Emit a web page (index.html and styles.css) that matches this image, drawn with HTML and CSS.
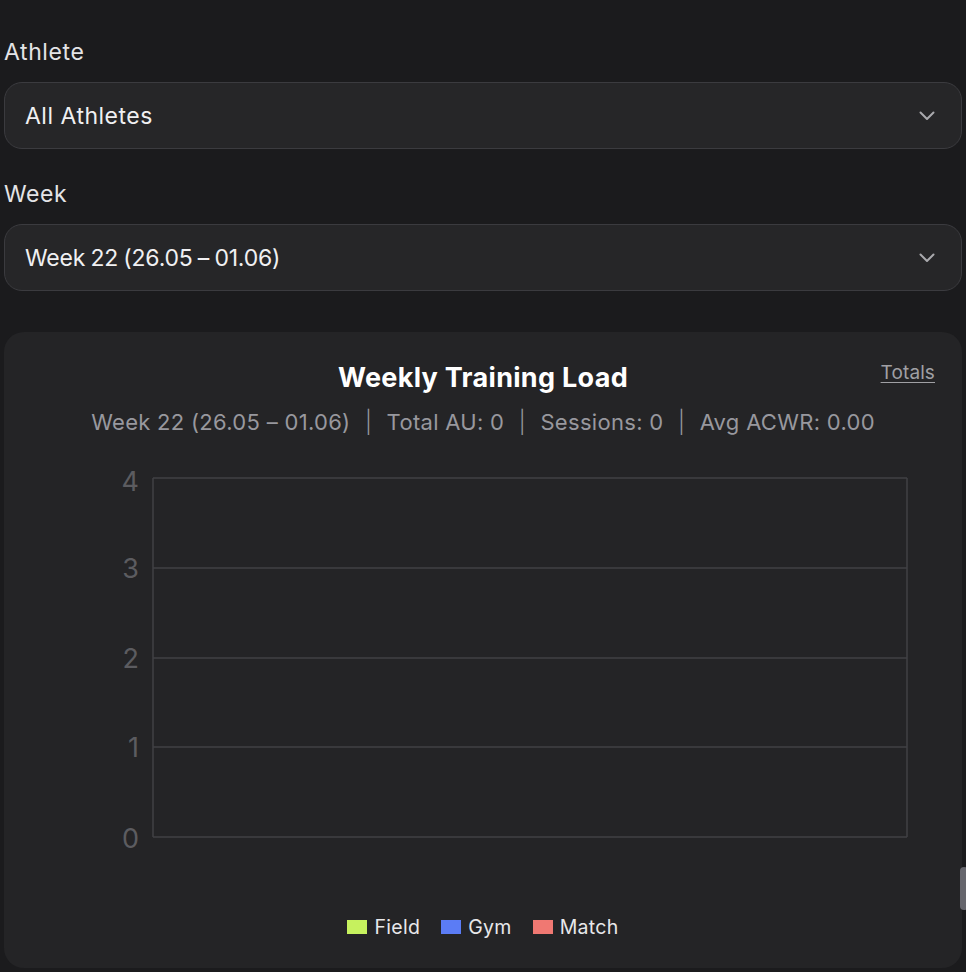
FILE: index.html
```html
<!DOCTYPE html>
<html lang="en">
<head>
<meta charset="utf-8">
<title>Weekly Training Load</title>
<link rel="stylesheet" href="styles.css">
</head>
<body>
<div class="page">
  <div class="field">
    <label class="field-label">Athlete</label>
    <div class="select">
      <span class="select-value">All Athletes</span>
      <svg class="chev" width="16" height="10" viewBox="0 0 16 10"><path d="M1.5 1.5 L8 8 L14.5 1.5" fill="none" stroke="#a9a9ad" stroke-width="2" stroke-linecap="round" stroke-linejoin="round"/></svg>
    </div>
  </div>
  <div class="field">
    <label class="field-label">Week</label>
    <div class="select">
      <span class="select-value num">Week 22 (26.05 – 01.06)</span>
      <svg class="chev" width="16" height="10" viewBox="0 0 16 10"><path d="M1.5 1.5 L8 8 L14.5 1.5" fill="none" stroke="#a9a9ad" stroke-width="2" stroke-linecap="round" stroke-linejoin="round"/></svg>
    </div>
  </div>

  <section class="card">
    <a class="totals" href="#">Totals</a>
    <h2 class="card-title">Weekly Training Load</h2>
    <p class="card-sub">Week 22 (26.05 – 01.06) <span class="sep">|</span> Total AU: 0 <span class="sep">|</span> Sessions: 0 <span class="sep">|</span> Avg ACWR: 0.00</p>
    <svg class="chart" width="958" height="400" viewBox="0 0 958 400">
      <g stroke="#414145" stroke-width="1.5" fill="none">
        <line x1="149" y1="18" x2="903" y2="18"/>
        <line x1="149" y1="108" x2="903" y2="108"/>
        <line x1="149" y1="198" x2="903" y2="198"/>
        <line x1="149" y1="287" x2="903" y2="287"/>
        <line x1="149" y1="377" x2="903" y2="377"/>
        <line x1="149" y1="18" x2="149" y2="377"/>
        <line x1="903" y1="18" x2="903" y2="377"/>
      </g>
      <g class="ytick" text-anchor="end">
        <text x="135" y="31">4</text>
        <text x="135" y="118">3</text>
        <text x="135" y="208">2</text>
        <text x="135" y="297">1</text>
        <text x="135" y="388">0</text>
      </g>
    </svg>
    <div class="legend">
      <span class="legend-item"><i class="sw sw-field"></i>Field</span>
      <span class="legend-item"><i class="sw sw-gym"></i>Gym</span>
      <span class="legend-item"><i class="sw sw-match"></i>Match</span>
    </div>
  </section>
</div>
<div class="scroll-thumb"></div>
</body>
</html>
```

FILE: styles.css
```css
html, body {
  margin: 0;
  padding: 0;
  background: #1b1b1d;
}
body {
  font-family: "Inter", "Noto Sans", sans-serif;
  color: #e6e6e8;
  width: 966px;
  height: 972px;
  overflow: hidden;
  position: relative;
}
.page {
  padding: 39px 4px 0 4px;
}
.field {
  display: flex;
  flex-direction: column;
}
.field + .field {
  margin-top: 32px;
}
.field-label {
  font-size: 23px;
  line-height: 26px;
  letter-spacing: 0.6px;
  color: #e4e4e6;
  margin-bottom: 17px;
}
.select {
  height: 67px;
  box-sizing: border-box;
  border: 1px solid #3b3b3f;
  border-radius: 18px;
  background: #262628;
  display: flex;
  align-items: center;
  justify-content: space-between;
  padding: 0 26px 0 20px;
}
.select-value {
  font-size: 23px;
  letter-spacing: 0.5px;
  color: #f0f0f2;
}
.select-value.num {
  font-variant-numeric: proportional-nums;
  letter-spacing: -0.2px;
  word-spacing: -1px;
}
.chev {
  display: block;
}
.card {
  position: relative;
  margin-top: 41px;
  height: 636px;
  box-sizing: border-box;
  background: #242426;
  border-radius: 20px;
  padding-top: 30px;
}
.totals {
  position: absolute;
  top: 29px;
  right: 27px;
  font-size: 19px;
  letter-spacing: 0.1px;
  color: #a0a0a4;
  text-decoration: underline;
  text-underline-offset: 3px;
}
.card-title {
  margin: 0;
  text-align: center;
  font-size: 27px;
  line-height: 32px;
  letter-spacing: 0.3px;
  font-weight: 700;
  color: #ffffff;
}
.card-sub {
  margin: 15px 0 0;
  text-align: center;
  font-size: 22px;
  line-height: 26px;
  letter-spacing: 0.3px;
  color: #98989e;
}
.sep {
  margin: 0 8px;
  font-weight: 300;
}
.chart {
  display: block;
  margin-top: 25px;
}
.ytick text {
  font-family: "Inter", "Noto Sans", sans-serif;
  font-size: 27px;
  fill: #5c5c60;
}
.legend {
  margin-top: 55px;
  display: flex;
  justify-content: center;
  gap: 21px;
  font-size: 19.5px;
  letter-spacing: 0.3px;
  color: #e8e8ea;
}
.legend-item {
  display: flex;
  align-items: center;
}
.sw {
  display: inline-block;
  width: 20px;
  height: 14px;
  margin-right: 7px;
}
.sw-field { background: #c6f15e; }
.sw-gym { background: #5b7cf5; }
.sw-match { background: #f07872; }
.scroll-thumb {
  position: absolute;
  left: 960px;
  top: 867px;
  width: 8px;
  height: 43px;
  border-radius: 4px;
  background: #66666d;
}
```
